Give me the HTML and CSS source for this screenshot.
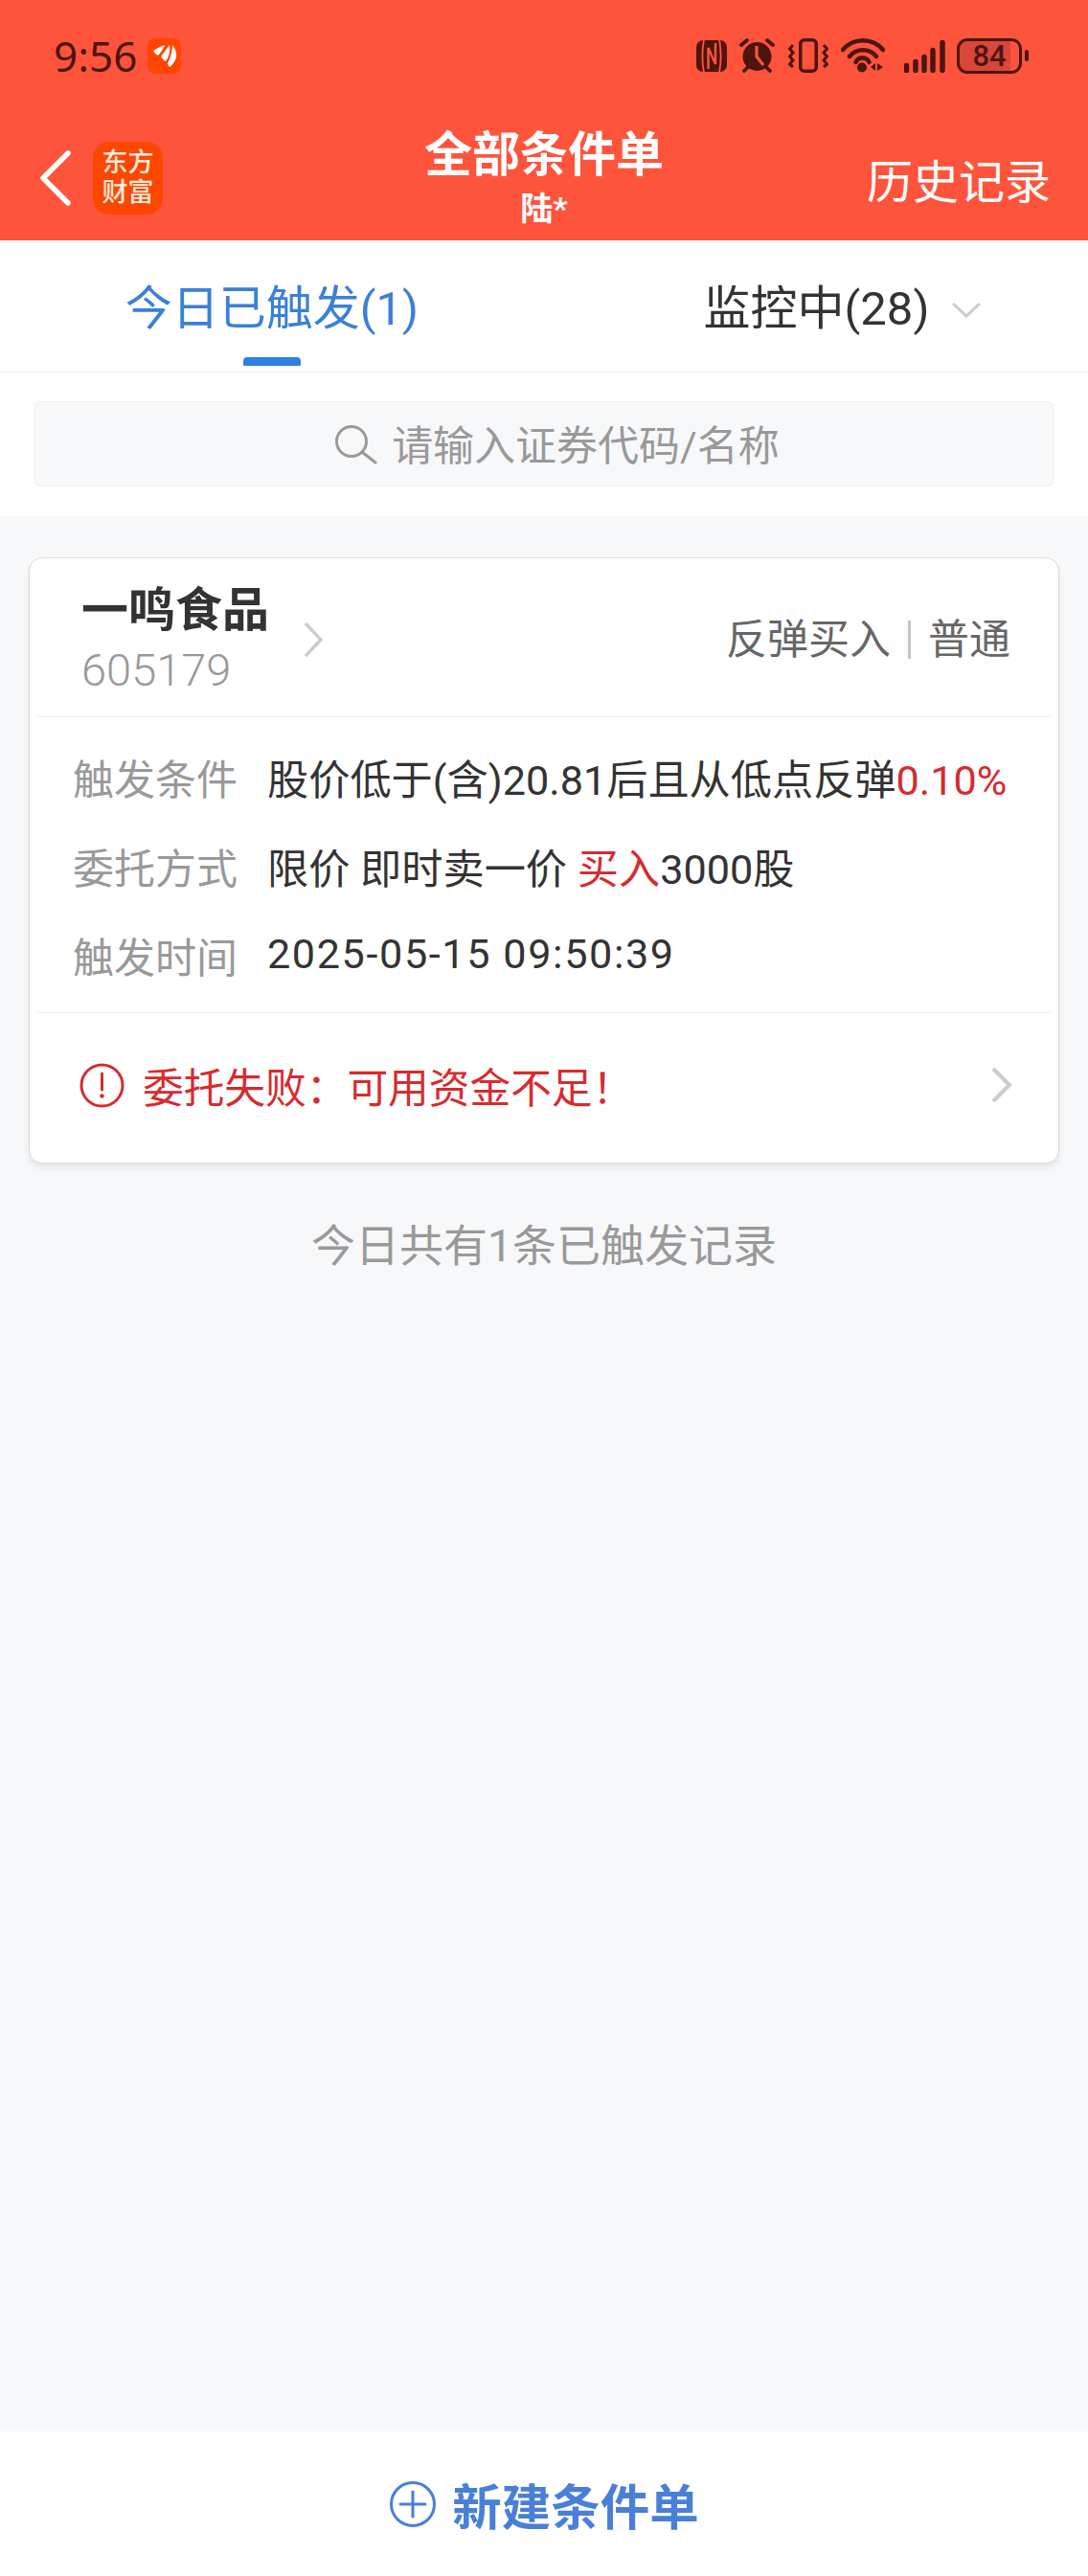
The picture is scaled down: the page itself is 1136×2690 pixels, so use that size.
FILE: index.html
```html
<!DOCTYPE html>
<html lang="zh-CN">
<head>
    <meta charset="UTF-8">
    <meta name="viewport" content="width=device-width, initial-scale=1.0">
    <title>全部条件单</title>
    <link rel="stylesheet" href="styles.css">
</head>
<body>
<div class="page">

    <header class="top">
        <div class="status-bar">
            <div class="status-left">
                <span class="time">9:56</span>
                <span class="notify-icon">
                    <svg width="35" height="37" viewBox="0 0 35 37"><path d="M6 13 C10 10 15 8 18 7 C17 11 14 14 11 18 C9 17 7 15 6 13 Z M14 19 C17 15 20 11 23 7 C24 12 23 19 19 24 C17 23 15 21 14 19 Z M26 7 C29 11 31 15 30 20 C29 24 26 28 23 30 C22 29 21 27 21 26 C24 21 26 13 26 7 Z" fill="#fff"/></svg>
                </span>
            </div>
            <div class="status-right">
                <svg width="32" height="33" viewBox="0 0 32 33"><rect width="32" height="33" rx="7" fill="#4d1510"/><path d="M8 -1 C6 10 6 23 8 34 M24 -1 C26 10 26 23 24 34" fill="none" stroke="#ff543c" stroke-width="1.800"/><path d="M12.500 30 V8 L20 25 V3" fill="none" stroke="#ff543c" stroke-width="2.400"/></svg>
                <svg width="38" height="36" viewBox="0 0 38 36"><circle cx="18.500" cy="19" r="15" fill="#4d1510"/><path d="M18 8 V19 L25 28" fill="none" stroke="#ff543c" stroke-width="3.200"/><path d="M2 7 L8 2 M35 7 L29 2 M5 34 L9 30 M32 34 L28 30" stroke="#4d1510" stroke-width="3.800" stroke-linecap="round"/></svg>
                <svg width="42" height="36" viewBox="0 0 42 36"><rect x="12.750" y="1.750" width="16.500" height="32.500" rx="4" fill="none" stroke="#4d1510" stroke-width="3.500"/><path d="M5 7 L1.500 11 L5 15 L1.500 19 L5 23 L1.500 27 L5 30 M37 7 L40.500 11 L37 15 L40.500 19 L37 23 L40.500 27 L37 30" fill="none" stroke="#4d1510" stroke-width="3"/></svg>
                <svg width="46" height="36" viewBox="0 0 46 36"><path d="M2 12 C13 -1 33 -1 44 12 M9 19 C16 10 30 10 37 19 M15.500 25 C18 19 27 19 29.500 25" fill="none" stroke="#4d1510" stroke-width="4.500" stroke-linecap="round"/><circle cx="22" cy="30.500" r="5" fill="#4d1510"/><path d="M36 26 V34 L31 30 Z M38 26 V34 L44 30 Z" fill="#4d1510"/></svg>
                <svg class="signal" width="44" height="35" viewBox="0 0 44 35"><path d="M2.500 27.500 V32.500 M12 23.500 V32.500 M21 18.500 V32.500 M30 11.500 V32.500 M40 3.500 V32.500" stroke="#4d1510" stroke-width="5.500" stroke-linecap="round"/></svg>
                <div class="battery-wrap">
                    <div class="battery"><span>84</span></div>
                    <span class="battery-nub"></span>
                </div>
            </div>
        </div>
        <nav class="nav-bar">
            <div class="nav-left">
                <svg width="34" height="60" viewBox="0 0 34 60"><path d="M30 4 L4 30 L30 56" fill="none" stroke="#fff" stroke-width="5.500" stroke-linecap="round" stroke-linejoin="round"/></svg>
                <div class="logo"><span>东方</span><span>财富</span></div>
            </div>
            <div class="nav-title">
                <div class="title">全部条件单</div>
                <div class="subtitle">陆*</div>
            </div>
            <div class="nav-right">历史记录</div>
        </nav>
    </header>

    <div class="tabs">
        <div class="tab active">
            <span class="tab-label">今日已触发(1)</span>
            <span class="tab-bar"></span>
        </div>
        <div class="tab">
            <div class="tab-row">
                <span class="tab-label">监控中(28)</span>
                <svg width="32" height="17" viewBox="0 0 32 17"><path d="M2 2 L16 15 L30 2" fill="none" stroke="#ccc" stroke-width="3"/></svg>
            </div>
        </div>
    </div>

    <div class="search-wrap">
        <div class="search-box">
            <svg width="45" height="42" viewBox="0 0 45 42"><circle cx="18" cy="18" r="15.500" fill="none" stroke="#999" stroke-width="3"/><path d="M29 29 L43 40" stroke="#999" stroke-width="3" stroke-linecap="round"/></svg>
            <span>请输入证券代码/名称</span>
        </div>
    </div>

    <section class="card">
        <div class="card-head">
            <div class="stock">
                <div class="stock-name">一鸣食品</div>
                <div class="stock-code">605179</div>
            </div>
            <svg class="stock-arrow" width="22" height="38" viewBox="0 0 22 38"><path d="M3 2 L19 19 L3 36" fill="none" stroke="#ccc" stroke-width="3.500"/></svg>
            <div class="order-type">
                <span>反弹买入</span>
                <i class="sep"></i>
                <span>普通</span>
            </div>
        </div>
        <div class="card-body">
            <div class="row">
                <span class="row-label">触发条件</span>
                <span class="row-value">股价低于(含)20.81后且从低点反弹<em>0.10%</em></span>
            </div>
            <div class="row">
                <span class="row-label">委托方式</span>
                <span class="row-value">限价 即时卖一价 <em>买入</em>3000股</span>
            </div>
            <div class="row">
                <span class="row-label">触发时间</span>
                <span class="row-value row-date">2025-05-15 09:50:39</span>
            </div>
        </div>
        <div class="fail-row">
            <svg width="47" height="47" viewBox="0 0 47 47"><circle cx="23.500" cy="23.500" r="21.500" fill="none" stroke="#d62b30" stroke-width="3"/><path d="M23.500 11 V28" stroke="#d62b30" stroke-width="3" stroke-linecap="round"/><circle cx="23.500" cy="34.500" r="2.200" fill="#d62b30"/></svg>
            <span class="fail-text">委托失败：可用资金不足！</span>
            <svg class="fail-arrow" width="24" height="38" viewBox="0 0 24 38"><path d="M3 2 L20 19 L3 36" fill="none" stroke="#ccc" stroke-width="4"/></svg>
        </div>
    </section>

    <p class="summary">今日共有1条已触发记录</p>

    <footer class="bottom">
        <svg width="50" height="50" viewBox="0 0 50 50"><circle cx="25" cy="25" r="22.500" fill="none" stroke="#4a7fd8" stroke-width="3"/><path d="M12 25 H38 M25 12 V38" stroke="#4a7fd8" stroke-width="3" stroke-linecap="round"/></svg>
        <span>新建条件单</span>
    </footer>

</div>
</body>
</html>
```

FILE: styles.css
```css
* {
    box-sizing: border-box;
}

body {
    margin: 0;
    font-family: Roboto, "Noto Sans CJK SC", sans-serif;
    background: #f7f8fa;
    color: #333;
}

.page {
    width: 1136px;
    height: 2690px;
    display: flex;
    flex-direction: column;
    overflow: hidden;
}

/* header */
.top {
    background: #ff543c;
    height: 251px;
    flex-shrink: 0;
}

.status-bar {
    height: 120px;
    padding: 0 62px 4px 56px;
    display: flex;
    justify-content: space-between;
    align-items: center;
}

.status-left {
    display: flex;
    align-items: center;
    gap: 11px;
}

.time {
    font-family: "Noto Sans", sans-serif;
    font-size: 44px;
    color: #4d1510;
    line-height: 40px;
}

.notify-icon {
    width: 35px;
    height: 37px;
    background: #ff4500;
    border-radius: 8px;
    display: flex;
}

.status-right {
    display: flex;
    align-items: center;
    gap: 13px;
}

.signal {
    margin-left: 7px;
    margin-right: -2px;
}

.battery-wrap {
    display: flex;
    align-items: center;
    gap: 3px;
}

.battery {
    width: 68px;
    height: 37px;
    border: 3px solid #4d1510;
    border-radius: 11px;
    background: linear-gradient(90deg, #d9463a 86%, transparent 86%);
    font-size: 31px;
    font-weight: 500;
    color: #4d1510;
    text-align: center;
    line-height: 31px;
}

.battery-nub {
    width: 4px;
    height: 12px;
    background: #4d1510;
    border-radius: 2px;
}

.nav-bar {
    height: 131px;
    display: grid;
    grid-template-columns: 1fr auto 1fr;
    align-items: center;
    color: #fff;
}

.nav-left {
    display: flex;
    align-items: center;
    gap: 22px;
    padding-left: 41px;
}

.logo {
    width: 73px;
    height: 76px;
    background: #fd4700;
    border-radius: 17px;
    display: flex;
    flex-direction: column;
    align-items: center;
    justify-content: center;
    font-size: 27px;
    font-weight: 500;
    line-height: 31px;
    color: #ffe9dc;
}

.nav-title {
    text-align: center;
    margin-top: -3px;
}

.title {
    font-size: 50px;
    font-weight: 700;
    line-height: 58px;
}

.subtitle {
    font-size: 34px;
    font-weight: 700;
    line-height: 36px;
    margin-top: 9px;
}

.nav-right {
    font-size: 48px;
    text-align: right;
    padding-right: 39px;
}

/* tabs */
.tabs {
    display: flex;
    height: 138px;
    background: #fff;
    border-bottom: 1px solid #eee;
    flex-shrink: 0;
}

.tab {
    flex: 1;
    display: flex;
    flex-direction: column;
    align-items: center;
    padding-top: 37px;
}

.tab-label {
    font-size: 49px;
    line-height: 70px;
}

.tab.active .tab-label {
    color: #3a80d8;
}

.tab-bar {
    width: 60px;
    height: 9px;
    margin-top: 15px;
    background: #3080e0;
    border-radius: 4px 4px 1px 1px;
}

.tab-row {
    display: flex;
    align-items: center;
    gap: 23px;
    padding-left: 56px;
}

/* search */
.search-wrap {
    background: #fff;
    padding: 30px 36px 31px;
    flex-shrink: 0;
}

.search-box {
    height: 89px;
    padding-left: 27px;
    background: #f7f8fa;
    border: 1px solid #eee;
    border-radius: 5px;
    display: flex;
    align-items: center;
    justify-content: center;
    gap: 15px;
    font-size: 43px;
    color: #999;
}

.search-box span {
    margin-top: -3px;
}

/* card */
.card {
    margin: 43px 30px 0;
    background: #fff;
    border: 1px solid #dcdcdc;
    border-radius: 14px;
    box-shadow: 0 5px 6px rgba(0, 0, 0, 0.07);
    flex-shrink: 0;
}

.card-head {
    height: 166px;
    margin: 0 8px;
    padding: 25px 42px 0 46px;
    border-bottom: 1px solid #eee;
    display: flex;
    align-items: flex-start;
}

.stock-name {
    font-size: 49px;
    font-weight: 700;
    line-height: 60px;
}

.stock-code {
    font-size: 47px;
    font-weight: 300;
    line-height: 54px;
    margin-top: 5px;
    color: #999;
}

.stock-arrow {
    margin: 41px 0 0 35px;
}

.order-type {
    margin-left: auto;
    margin-top: 30px;
    display: flex;
    align-items: center;
    gap: 18px;
    font-size: 43px;
    line-height: 60px;
    color: #666;
}

.sep {
    width: 3px;
    height: 40px;
    background: #c4c4c4;
}

.card-body {
    padding: 15px 0 13.500px 45px;
}

.row {
    display: flex;
    align-items: center;
    height: 93px;
    font-size: 43px;
}

.row-label {
    width: 203px;
    color: #999;
}

.row-value {
    font-size: 43.200px;
}

.row-value em {
    font-style: normal;
    color: #d62b30;
}

.row-date {
    letter-spacing: 1.600px;
}

.fail-row {
    height: 157px;
    margin: 0 8px;
    padding: 0 39px 5px 44px;
    border-top: 1px solid #eee;
    display: flex;
    align-items: center;
    gap: 19px;
    font-size: 42.700px;
    color: #d62b30;
}

.fail-arrow {
    margin-left: auto;
}

.summary {
    margin: 53px 0 0;
    text-align: center;
    font-size: 46px;
    line-height: 66px;
    color: #999;
}

/* bottom button */
.bottom {
    margin-top: auto;
    height: 151px;
    background: #fff;
    display: flex;
    align-items: center;
    justify-content: center;
    gap: 16px;
    font-size: 51.500px;
    font-weight: 700;
    color: #4a7fd8;
}
```
